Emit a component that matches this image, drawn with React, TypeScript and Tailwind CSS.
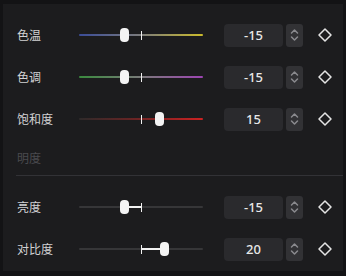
import React from "react";

type SliderProps = {
  track: string;
  thumb: number;
  tick: number;
  fill?: boolean;
};

function Slider({ track, thumb, tick, fill }: SliderProps) {
  const lo = Math.min(thumb, tick);
  const hi = Math.max(thumb, tick);
  return (
    <div className="relative w-[124px] h-[14px] shrink-0">
      <div className={`absolute left-0 right-0 top-[6px] h-[2px] rounded-full ${track}`} />
      {fill && (
        <div
          className="absolute top-[6px] h-[2px] bg-[#f2f2f2]"
          style={{ left: lo, width: hi - lo }}
        />
      )}
      <div
        className="absolute top-[3px] h-[9px] w-[1px] bg-[#f0f0f0]"
        style={{ left: tick }}
      />
      <div
        className="absolute top-0 h-[14px] w-[9px] rounded-[4px] bg-[#f4f4f4]"
        style={{ left: thumb - 4 }}
      />
    </div>
  );
}

function Stepper() {
  return (
    <div className="ml-[3px] w-[17px] h-[23px] rounded-[3px] bg-[#323235] flex items-center justify-center">
      <svg width="9" height="14" viewBox="0 0 9 14" fill="none">
        <path d="M1.5 5 L4.5 2 L7.5 5" stroke="#8a8a8e" strokeWidth="1.5" strokeLinecap="round" strokeLinejoin="round" />
        <path d="M1.5 9 L4.5 12 L7.5 9" stroke="#8a8a8e" strokeWidth="1.5" strokeLinecap="round" strokeLinejoin="round" />
      </svg>
    </div>
  );
}

function Diamond() {
  return (
    <div className="ml-[15px] w-[14px] h-[14px] flex items-center justify-center">
      <svg width="14" height="14" viewBox="0 0 14 14" fill="none">
        <path d="M7 1 L13 7 L7 13 L1 7 Z" stroke="#e4e4e4" strokeWidth="1.5" strokeLinejoin="round" />
      </svg>
    </div>
  );
}

type RowProps = SliderProps & { label: string; value: string };

function Row({ label, value, ...s }: RowProps) {
  return (
    <div className="h-[42px] flex items-center pl-[14px]">
      <div className="w-[62px] text-[12px] text-[#d2d2d4] leading-none">{label}</div>
      <Slider {...s} />
      <div className="ml-[21px] w-[59px] h-[23px] rounded-[4px] bg-[#2a2a2d] flex items-center justify-center text-[13px] font-medium text-[#e8e8e8] leading-none" style={{ fontFamily: '"Noto Sans", sans-serif' }}>
        {value}
      </div>
      <Stepper />
      <Diamond />
    </div>
  );
}

export default function App() {
  return (
    <div
      className="w-[346px] h-[276px] bg-[#131315] pt-[4px] pl-[3px] pr-[3px] pb-[5px]"
      style={{ fontFamily: '"Noto Sans CJK SC", "Noto Sans", sans-serif' }}
    >
      <div className="w-full h-full bg-[#1c1c1e] pt-[10px] flex flex-col">
        <Row
          label="色温"
          value="-15"
          track="bg-[linear-gradient(90deg,#3a4c98,#7c7c7c_50%,#cbbb2c)]"
          thumb={45}
          tick={62}
        />
        <Row
          label="色调"
          value="-15"
          track="bg-[linear-gradient(90deg,#3a8a3e,#7a7a7a_50%,#9c44b2)]"
          thumb={45}
          tick={62}
        />
        <Row
          label="饱和度"
          value="15"
          track="bg-[linear-gradient(90deg,#2e2a2a,#6a2424_45%,#cc2222)]"
          thumb={80}
          tick={62}
        />
        <div className="h-[35px] flex items-center pl-[14px] text-[12px] text-[#4a4a4e] leading-none">
          明度
        </div>
        <div className="ml-[13px] h-[1px] bg-[#323236]" />
        <div className="h-[10px]" />
        <Row label="亮度" value="-15" track="bg-[#363638]" thumb={45} tick={62} fill />
        <Row label="对比度" value="20" track="bg-[#363638]" thumb={85} tick={62} fill />
      </div>
    </div>
  );
}
